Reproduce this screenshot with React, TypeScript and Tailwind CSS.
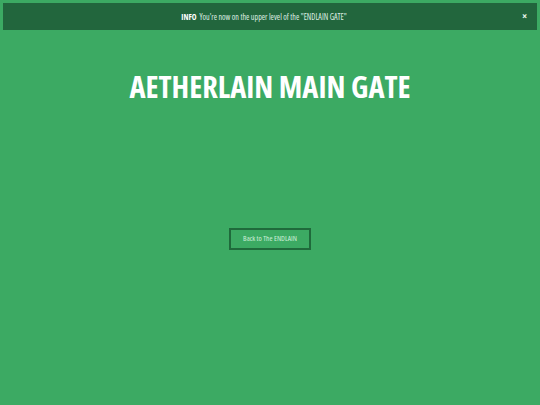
export default function App() {
  return (
    <div className="h-[405px] w-[540px] overflow-hidden bg-[#3caa63] font-['Open_Sans',sans-serif] text-white [font-stretch:condensed]">
      <div className="px-[3px] pt-[3px]">
        <div className="relative flex h-[27px] items-center justify-center bg-[#22663d] pr-[12px] text-[8px]">
          <span className="font-bold">INFO</span>
          <span className="ml-[3px] text-[#dfeee4]">You're now on the upper level of the "ENDLAIN GATE"</span>
          <button type="button" className="absolute right-[10px] top-[8px] text-[10px] font-bold leading-none text-[#e6f5ea]">
            ×
          </button>
        </div>
      </div>
      <h1 className="mt-[41px] text-center text-[30.5px] font-bold leading-none">
        AETHERLAIN MAIN GATE
      </h1>
      <div className="mt-[126px] flex justify-center">
        <button
          type="button"
          className="h-[22px] w-[82px] border-2 border-[#1f6a3b] text-[7.5px] text-[#cdeed8]"
        >
          Back to The ENDLAIN
        </button>
      </div>
    </div>
  );
}
